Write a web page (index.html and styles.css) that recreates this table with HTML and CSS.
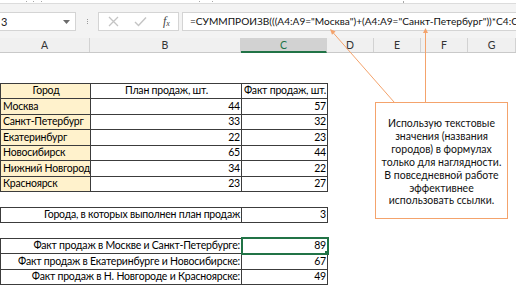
FILE: index.html
```html
<!DOCTYPE html>
<html lang="ru">
<head>
<meta charset="utf-8">
<link rel="stylesheet" href="styles.css">
</head>
<body>
<div class="app">
  <div class="ribbon-edge">
    <span class="rdot d1"></span><span class="rdot d2"></span><span class="rdot d3"></span>
    <span class="rdot d4"></span><span class="rdot d5"></span><span class="rdot d6"></span>
  </div>
  <div class="fbar">
    <div class="namebox">
      <span class="nb-text">3</span>
      <svg class="dd" width="7" height="4" viewBox="0 0 7 4"><path d="M0 0H7L3.5 4Z" fill="#6b6b6b"/></svg>
    </div>
    <div class="grip"><i></i><i></i><i></i></div>
    <div class="fbtns">
      <svg class="fb-x" width="11" height="11" viewBox="0 0 11 11"><path d="M1 1L10 10M10 1L1 10" stroke="#c4c4c4" stroke-width="1.3" fill="none"/></svg>
      <svg class="fb-ok" width="13" height="11" viewBox="0 0 13 11"><path d="M1 6L4.5 9.5L12 1.5" stroke="#c4c4c4" stroke-width="1.4" fill="none"/></svg>
      <span class="fx">f<sub>x</sub></span>
    </div>
    <div class="finput">=СУММПРОИЗВ(((A4:A9="Москва")+(A4:A9="Санкт-Петербург"))*C4:C9)</div>
  </div>
  <div class="colheads">
    <div class="ch w-a">A</div>
    <div class="ch w-b">B</div>
    <div class="ch w-c sel">C</div>
    <div class="ch w-d">D</div>
    <div class="ch w-d">E</div>
    <div class="ch w-d">F</div>
    <div class="ch w-g">G</div>
  </div>
  <table class="sheet">
    <colgroup>
      <col class="c-a"><col class="c-b"><col class="c-c"><col class="c-d"><col class="c-d"><col class="c-d"><col class="c-g">
    </colgroup>
    <tr class="r-top"><td></td><td></td><td></td><td></td><td></td><td></td><td></td></tr>
    <tr class="r-top2"><td></td><td></td><td></td><td></td><td></td><td></td><td></td></tr>
    <tr><td class="b y ctr">Город</td><td class="b hdr ctr">План продаж, шт.</td><td class="b hdr ctr">Факт продаж, шт.</td><td></td><td></td><td></td><td></td></tr>
    <tr><td class="b y">Москва</td><td class="b num">44</td><td class="b num">57</td><td></td><td></td><td></td><td></td></tr>
    <tr><td class="b y">Санкт-Петербург</td><td class="b num">33</td><td class="b num">32</td><td></td><td></td><td></td><td></td></tr>
    <tr><td class="b y">Екатеринбург</td><td class="b num">22</td><td class="b num">23</td><td></td><td></td><td></td><td></td></tr>
    <tr><td class="b y">Новосибирск</td><td class="b num">65</td><td class="b num">44</td><td></td><td></td><td></td><td></td></tr>
    <tr><td class="b y">Нижний Новгород</td><td class="b num">34</td><td class="b num">22</td><td></td><td></td><td></td><td></td></tr>
    <tr><td class="b y">Красноярск</td><td class="b num">23</td><td class="b num">27</td><td></td><td></td><td></td><td></td></tr>
    <tr><td></td><td></td><td></td><td></td><td></td><td></td><td></td></tr>
    <tr><td class="b num" colspan="2">Города, в которых выполнен план продаж</td><td class="b num">3</td><td></td><td></td><td></td><td></td></tr>
    <tr><td></td><td></td><td></td><td></td><td></td><td></td><td></td></tr>
    <tr><td class="b num" colspan="2">Факт продаж в Москве и Санкт-Петербурге:</td><td class="b num active">89<span class="handle"></span></td><td></td><td></td><td></td><td></td></tr>
    <tr><td class="b num" colspan="2">Факт продаж в Екатеринбурге и Новосибирске:</td><td class="b num">67</td><td></td><td></td><td></td><td></td></tr>
    <tr><td class="b num" colspan="2">Факт продаж в Н. Новгороде и Красноярске:</td><td class="b num">49</td><td></td><td></td><td></td><td></td></tr>
    <tr><td></td><td></td><td></td><td></td><td></td><td></td><td></td></tr>
  </table>
  <div class="callout">Использую текстовые значения (названия городов) в формулах только для наглядности. В повседневной работе эффективнее использовать ссылки.</div>
  <svg class="arrows" width="516" height="290" viewBox="0 0 516 290">
    <g stroke="#f4a36c" stroke-width="1" fill="none">
      <path d="M394 102L332.5 32"/>
      <path d="M425.5 102V32"/>
    </g>
    <g fill="#f4a36c">
      <path d="M330 29L335.6 31.6L332 34.8Z"/>
      <path d="M425.5 28L428 33H423Z"/>
    </g>
  </svg>
</div>
</body>
</html>
```

FILE: styles.css
```css
html, body {
  margin: 0;
  padding: 0;
  background: #ffffff;
}
.app {
  position: relative;
  width: 516px;
  height: 290px;
  overflow: hidden;
  font-family: "Lato", "Liberation Sans", sans-serif;
  color: #000;
}
.ribbon-edge {
  position: relative;
  height: 3px;
  background: #ffffff;
  border-bottom: 1px solid #dcdcdc;
}
.rdot {
  position: absolute;
  top: 1px;
  width: 1px;
  height: 1px;
  background: #a8a8a8;
}
.d1 { left: 26px; }
.d2 { left: 33px; }
.d3 { left: 41px; }
.d4 { left: 199px; }
.d5 { left: 212px; }
.d6 { left: 403px; height: 2px; }
.fbar {
  display: flex;
  align-items: flex-start;
  height: 34px;
  box-sizing: border-box;
  padding-top: 8px;
  background: #f3f3f3;
}
.namebox {
  position: relative;
  width: 76px;
  height: 19px;
  box-sizing: border-box;
  background: #fff;
  border: 1px solid #d4d4d4;
  border-left: none;
  display: flex;
  align-items: center;
  justify-content: space-between;
  padding: 0 5px 0 1px;
  font-size: 11px;
  color: #222;
}
.dd { display: block; }
.grip {
  width: 22px;
  height: 19px;
  display: flex;
  flex-direction: column;
  align-items: center;
  justify-content: center;
  gap: 1px;
}
.grip i {
  display: block;
  width: 1px;
  height: 1px;
  background: #9a9a9a;
}
.fbtns {
  width: 81px;
  height: 19px;
  box-sizing: border-box;
  background: #fff;
  border: 1px solid #d4d4d4;
  display: flex;
  align-items: center;
  padding-left: 9px;
  gap: 0;
}
.fb-x { margin-right: 15px; }
.fb-ok { margin-right: 16px; }
.fx {
  font-family: "Liberation Serif", serif;
  font-style: italic;
  font-size: 12px;
  color: #444;
  line-height: 1;
}
.fx sub {
  font-size: 8px;
  vertical-align: -1px;
}
.finput {
  margin-left: 3px;
  flex: 1;
  height: 19px;
  box-sizing: border-box;
  background: #fff;
  border: 1px solid #d4d4d4;
  border-right: none;
  padding-left: 7px;
  font-size: 10.1px;
  line-height: 17px;
  white-space: nowrap;
  overflow: hidden;
  color: #111;
}
.colheads {
  display: flex;
  height: 15px;
  box-sizing: border-box;
  background: #f0f0f0;
  border-bottom: 1px solid #c9c9c9;
}
.ch {
  box-sizing: border-box;
  border-right: 1px solid #d2d2d2;
  text-align: center;
  font-size: 10.5px;
  line-height: 14px;
  color: #333;
  flex: none;
}
.w-a { width: 90px; }
.w-b { width: 151px; }
.w-c { width: 86px; }
.w-d { width: 47px; }
.w-g { width: 48px; }
.ch.sel {
  background: #d2d2d2;
  color: #217346;
  border-bottom: 2px solid #217346;
  height: 15px;
}
.sheet {
  table-layout: fixed;
  border-collapse: collapse;
  width: 517px;
  font-size: 10.5px;
  letter-spacing: -0.2px;
}
.c-a { width: 90px; }
.c-b { width: 151px; }
.c-c { width: 86px; }
.c-d { width: 47px; }
.c-g { width: 48px; }
.sheet tr { height: 14.5px; }
.sheet tr.r-top { height: 15px; }
.sheet tr.r-top2 { height: 14.7px; }
.sheet td {
  padding: 0 1px 0 2px;
  height: 14.5px;
  line-height: 13px;
  white-space: nowrap;
  overflow: hidden;
}
.b { border: 1px solid #3c3c3c; }
.y { background: #fff2cc; }
.hdr { background: #fff; }
.ctr { text-align: center; }
.num { text-align: right; }
.active {
  position: relative;
  outline: 2px solid #217346;
  outline-offset: -1px;
  overflow: visible;
}
.handle {
  position: absolute;
  right: -4px;
  bottom: -4px;
  width: 5px;
  height: 5px;
  background: #217346;
  border: 1px solid #fff;
}
.callout {
  position: absolute;
  left: 375px;
  top: 102px;
  width: 133px;
  height: 117px;
  box-sizing: border-box;
  border: 1.5px solid #f4a36c;
  background: #fff;
  padding: 14px 4px 0;
  text-align: center;
  font-size: 10.5px;
  line-height: 12.9px;
  color: #111;
}
.arrows {
  position: absolute;
  left: 0;
  top: 0;
  pointer-events: none;
}
```
